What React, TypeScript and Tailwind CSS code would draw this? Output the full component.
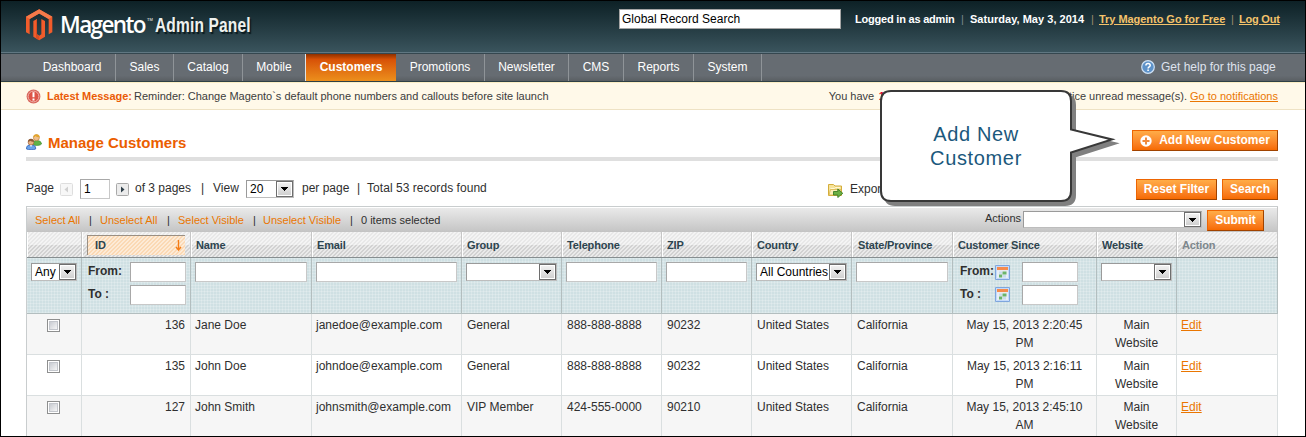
import type { ReactNode } from "react";

function Arrow({ className = "" }: { className?: string }) {
  return (
    <span className={`flex w-[17px] shrink-0 items-center justify-center self-stretch border border-[#6e6e6e] bg-linear-to-b from-[#f4f4f4] to-[#cdcdcd] shadow-[inset_0_0_0_1px_#fff] ${className}`}>
      <svg width="7" height="4" viewBox="0 0 7 4" shapeRendering="crispEdges">
        <path d="M0 0h7v1H0zM1 1h5v1H1zM2 2h3v1H2zM3 3h1v1H3z" fill="#000" />
      </svg>
    </span>
  );
}

function Select({ label = "", className = "" }: { label?: string; className?: string }) {
  return (
    <div className={`flex shrink-0 items-center border border-t-[#9a9a9a] border-l-[#9a9a9a] border-r-[#bdbdbd] border-b-[#bdbdbd] bg-white text-black ${className}`}>
      <span className="min-w-0 flex-1 pl-[3px] text-[12px] leading-[16px] whitespace-nowrap">{label}</span>
      <Arrow />
    </div>
  );
}

function Field({ children, className = "" }: { children?: ReactNode; className?: string }) {
  return (
    <div className={`h-5 shrink-0 border border-t-[#a8a8a8] border-l-[#a8a8a8] border-r-[#c8c8c8] border-b-[#c8c8c8] bg-white ${className}`}>
      {children}
    </div>
  );
}

function Button({ children, className = "" }: { children: ReactNode; className?: string }) {
  return (
    <button className={`flex h-[21px] shrink-0 items-center justify-center border border-t-[#ed6502] border-l-[#ed6502] border-r-[#a04300] border-b-[#a04300] bg-linear-to-b from-[#ffac47] to-[#f66a00] pb-px text-[12px] leading-[18px] font-bold whitespace-nowrap text-white ${className}`}>
      {children}
    </button>
  );
}

function Logo() {
  return (
    <svg width="27" height="32" viewBox="78 27 81 96" className="shrink-0">
      <path d="M117.500 28L157 50.500V97L146 103V57L117.500 40.500L89 57V103L78 97V50.500Z" fill="#f15c2b" />
      <path d="M117.500 28L157 50.500L146 57L117.500 40.500L89 57L78 50.500Z" fill="#f47a4a" />
      <path d="M100 63L111 57V103L117.500 107L124 103V57L135 63V110L117.500 121L100 110Z" fill="#f15c2b" />
      <path d="M111 57V103L117.500 107V121L108 115V59Z" fill="#d94d22" />
    </svg>
  );
}

function AlertIcon() {
  return (
    <svg width="15" height="15" viewBox="0 0 15 15" className="shrink-0">
      <circle cx="7.500" cy="7.500" r="6.900" fill="#d6645a" />
      <circle cx="7.500" cy="7.500" r="5.400" fill="#dd5548" stroke="#f0b3ab" strokeWidth="1" />
      <path d="M6.500 3.200h2v5h-2zM6.500 9.500h2v1.900h-2z" fill="#fff" />
    </svg>
  );
}

function HelpIcon() {
  return (
    <svg width="14" height="14" viewBox="0 0 14 14" className="shrink-0">
      <circle cx="7" cy="7" r="6.300" fill="#5d92c9" stroke="#cfe2f5" strokeWidth="1.200" />
      <path d="M4.900 5.400c0-2.600 4.300-2.600 4.300 0 0 1.500-2.100 1.500-2.100 3.100" fill="none" stroke="#fff" strokeWidth="1.500" />
      <path d="M6.300 9.600h1.600v1.500H6.300z" fill="#fff" />
    </svg>
  );
}

function CustomersIcon() {
  return (
    <svg width="16" height="16" viewBox="0 0 16 16" className="shrink-0">
      <path d="M6.500 10.500c0-3 2-4 4.200-4s4.800 1 4.800 3.500c-1 1.500-6 2-9 .5z" fill="#5fb348" stroke="#3c8a2c" strokeWidth=".7" />
      <circle cx="10.400" cy="3.700" r="3" fill="#f0c08c" stroke="#b67a35" strokeWidth=".6" />
      <path d="M7.300 3.500C7.300 1 8.700.3 10.500.3s3.200 1 3.200 3c-2 0-3.500-.3-4.200-1.200-.4.900-1.200 1.300-2.200 1.400z" fill="#e3a62c" />
      <path d="M.5 15c-.3-3 1.700-4.200 4.500-4.200s5 1.200 4.700 4.200c-2 1-7 1-9.200 0z" fill="#6ba3ea" stroke="#2e62b8" strokeWidth=".8" />
      <circle cx="5" cy="8.200" r="2.900" fill="#e8b183" stroke="#96582f" strokeWidth=".6" />
      <path d="M2 8c0-2.400 1.300-3.200 3-3.200s3 1 3 3c-1.600 0-3-.2-3.800-1-.5.700-1.200 1.100-2.200 1.200z" fill="#8d5a34" />
      <path d="M3.800 11.200L5 13l1.300-1.800z" fill="#fff" />
    </svg>
  );
}

function ExportIcon() {
  return (
    <svg width="16" height="15" viewBox="0 0 16 15" className="shrink-0">
      <path d="M.5 12.500V1.500h5l1.500 1.500h6.500v9.500z" fill="#f6e39a" stroke="#d4ad3b" />
      <path d="M2.500 5.500h4l1-1h4.500" fill="none" stroke="#fff8d6" />
      <path d="M1 12L2.500 6.500H13V12z" fill="#fbefb9" stroke="#d9b54c" strokeWidth=".8" />
      <path d="M5.500 8.500h4.300V6l5 4.300-5 4.200V12H5.500z" fill="#6bb045" stroke="#3c7d23" strokeWidth=".9" />
    </svg>
  );
}

function CalendarIcon() {
  return (
    <svg width="15" height="15" viewBox="0 0 15 15" className="shrink-0">
      <path d="M.5.5h14v14H.5z" fill="#e4eefb" stroke="#7fa6dd" />
      <path d="M1.500 1.500h12v12h-12z" fill="none" stroke="#c4dafa" />
      <path d="M2 2h11v3.200H2z" fill="#f58b4c" />
      <path d="M2 5.200h11V13H2z" fill="#e8eef5" />
      <path d="M7.500 6.500h4v3h-4zM4 9.500h3.200v3H4z" fill="#6bb46a" />
      <path d="M4 6.500h3v2.300H4zM7.800 10h3.200v2.500H7.800z" fill="#c9dcec" />
    </svg>
  );
}

function PageStep({ dir, dim = false, className = "" }: { dir: "prev" | "next"; dim?: boolean; className?: string }) {
  return (
    <svg width="13" height="13" viewBox="0 0 13 13" className={`shrink-0 ${className}`}>
      <rect x=".5" y=".5" width="12" height="12" rx="1" fill={dim ? "#f7f7f7" : "#ececec"} stroke={dim ? "#dedede" : "#a9a9a9"} />
      <path d={dir === "prev" ? "M8 3.500v6L4.500 6.500z" : "M5 3.500v6L8.500 6.500z"} fill={dim ? "#d0d0d0" : "#2f3f4a"} />
    </svg>
  );
}

const navSep = "border-r border-[#8f9498]";
const nav = [
  ["Dashboard", `w-[87px] ${navSep}`],
  ["Sales", `w-[58px] ${navSep}`],
  ["Catalog", `w-[69px] ${navSep}`],
  ["Mobile", "w-[63px] border-r border-[#dfe3e4]"],
  ["Customers", "w-[90px] bg-linear-to-b from-[#8e3000] via-[#d75107] via-20% to-[#ec8f1c] font-bold"],
  ["Promotions", `w-[89px] ${navSep}`],
  ["Newsletter", `w-[84px] ${navSep}`],
  ["CMS", `w-[55px] ${navSep}`],
  ["Reports", `w-[70px] ${navSep}`],
  ["System", `w-[68px] ${navSep}`],
];

const cols = "grid grid-cols-[55px_109px_121px_150px_100px_100px_90px_100px_101px_144px_80px_101px]";

const heads = ["Name", "Email", "Group", "Telephone", "ZIP", "Country", "State/Province", "Customer Since", "Website"];

const rows = [
  ["136", "Jane Doe", "janedoe@example.com", "General", "888-888-8888", "90232", "May 15, 2013 2:20:45", "PM"],
  ["135", "John Doe", "johndoe@example.com", "General", "888-888-8888", "90232", "May 15, 2013 2:16:11", "PM"],
  ["127", "John Smith", "johnsmith@example.com", "VIP Member", "424-555-0000", "90210", "May 15, 2013 2:45:10", "AM"],
];

function HeadCell({ children, className = "" }: { children?: ReactNode; className?: string }) {
  return (
    <div className={`border-r border-l border-r-[#c6c6c6] border-l-white pt-[5px] pl-1 text-[11px] leading-4 font-bold tracking-[-0.15px] whitespace-nowrap ${className}`}>
      {children}
    </div>
  );
}

function FilterCell({ children }: { children?: ReactNode }) {
  return <div className="border-r border-[#b3bebf] px-1 pt-1">{children}</div>;
}

function Cell({ children, className = "" }: { children?: ReactNode; className?: string }) {
  return <div className={`border-r border-[#dadfe0] px-[5px] pt-0.5 ${className}`}>{children}</div>;
}

function Callout() {
  return (
    <div className="absolute top-[87px] left-[877px] h-[122px] w-[242px]">
      <svg width="242" height="122" viewBox="878 88 242 122" className="absolute inset-0">
        <g transform="translate(4 4)" fill="#808080" stroke="#808080" strokeWidth="2">
          <path d="M891 91H1061Q1071 91 1071 101V129.500L1112 139.500L1071 152.500V191Q1071 201 1061 201H891Q881 201 881 191V101Q881 91 891 91Z" />
        </g>
        <path d="M891 91H1061Q1071 91 1071 101V129.500L1112 139.500L1071 152.500V191Q1071 201 1061 201H891Q881 201 881 191V101Q881 91 891 91Z" fill="#fff" stroke="#383838" strokeWidth="2" />
      </svg>
      <div className="relative w-[196px] pt-[34px] text-center text-[20px] leading-6 tracking-[0.65px] text-[#1b587c]">
        Add New
        <br />
        Customer
      </div>
    </div>
  );
}

export default function App() {
  return (
    <div className="relative flex h-[437px] w-[1306px] flex-col overflow-hidden border border-black bg-white font-['Liberation_Sans',Arial,sans-serif] text-[12px] leading-[18px] text-[#2f2f2f]">
      <header className="flex h-[51px] shrink-0 bg-linear-to-b from-[#0d2126] to-[#3a545d] pl-[25px] whitespace-nowrap">
        <div className="flex w-[593px] pt-2">
          <Logo />
          <span className="-mt-px ml-[7px] w-[87px] font-['Open_Sans','Noto_Sans',sans-serif] text-[22.5px] leading-[33px] font-semibold tracking-[-1.6px] text-white">Magento</span>
          <span className="mt-[6px] w-2 text-[4px] leading-[10px] text-white">TM</span>
          <span className="-mt-px w-[130px] origin-left scale-x-[.74] text-[21px] leading-[33px] font-bold tracking-[0.2px] text-[#eef1ee] [text-shadow:2px_2px_1px_#0a1a1e]">Admin Panel</span>
        </div>
        <div className="mt-2 h-5 w-[222px] border border-[#a5a5a5] bg-white pl-[2px] leading-[18px] text-black">Global Record Search</div>
        <div className="ml-[14px] flex pt-[9px] text-[11px] font-bold tracking-[-0.21px] text-white">
          <span className="w-[106px]">Logged in as admin</span>
          <span className="w-[9px] font-normal text-[#7b8a8c]">|</span>
          <span className="w-[121px] tracking-[0.03px]">Saturday, May 3, 2014</span>
          <span className="w-2 font-normal text-[#9b8d6c]">|</span>
          <span className="w-[132px] tracking-[-0.04px] text-[#f5c36b] underline">Try Magento Go for Free</span>
          <span className="w-2 font-normal text-[#9b8d6c]">|</span>
          <span className="text-[#f5c36b] underline">Log Out</span>
        </div>
      </header>

      <nav className="flex h-[30px] shrink-0 border-t border-b border-t-[#607782] border-b-[#2e4046] bg-[#666b71]">
        <div className="flex w-full border-t border-[#35474f] bg-linear-to-b from-[#666c72] from-80% to-[#5a5f63] pl-7">
          {nav.map(([name, cls]) => (
            <div key={name} className={`h-[27px] shrink-0 pt-1 text-center text-white ${cls}`}>
              {name}
            </div>
          ))}
          <div className="flex flex-1 items-start justify-end gap-[6px] pr-[30px] text-[#dfe3ee]">
            <span className="pt-[6px]"><HelpIcon /></span>
            <span className="w-[114px] pt-1 whitespace-nowrap">Get help for this page</span>
          </div>
        </div>
      </nav>

      <div className="flex h-7 shrink-0 items-center border-t border-b border-t-[#fbeec4] border-b-[#eee2c4] bg-[#fff9e9] pr-[27px] pl-[25px] text-[11px] whitespace-nowrap text-[#3c3c3c]">
        <AlertIcon />
        <span className="ml-[6px] w-[87px] font-bold tracking-[-0.05px] text-[#ea5b06]">Latest Message:</span>
        <span>Reminder: Change Magento`s default phone numbers and callouts before site launch</span>
        <span className="ml-auto w-[50px]">You have</span>
        <span className="w-[178px] font-bold text-[#e0002a]">1</span>
        <span>notice unread message(s).</span>
        <a className="ml-[3px] text-[#ea7601] underline">Go to notifications</a>
      </div>

      <main className="flex flex-1 flex-col pr-[27px] pl-[25px]">
        <div className="flex h-[51px] shrink-0 border-b-4 border-[#dfdfdf] pt-5">
          <div className="flex flex-1 pt-1">
            <CustomersIcon />
            <h1 className="ml-[6px] text-[15px] leading-[17px] font-bold text-[#eb5e00]">Manage Customers</h1>
          </div>
          <Button className="w-[146px]">
            <svg width="12" height="12" viewBox="0 0 12 12" className="mt-px mr-[7px]">
              <circle cx="6" cy="6" r="5.700" fill="#fff" />
              <path d="M5 2.500h2V5h2.500v2H7v2.500H5V7H2.500V5H5z" fill="#f08a3c" />
            </svg>
            Add New Customer
          </Button>
        </div>

        <div className="flex h-[45px] shrink-0 pt-[18px] whitespace-nowrap">
          <span className="w-[34px]">Page</span>
          <PageStep dir="prev" dim className="mt-1" />
          <Field className="ml-[7px] w-[30px] pl-[3px] leading-[18px] text-black">1</Field>
          <PageStep dir="next" className="mt-1 ml-[6px]" />
          <span className="ml-[6px] w-[66px]">of 3 pages</span>
          <span className="w-3">|</span>
          <span className="w-[33px]">View</span>
          <Select label="20" className="mt-px h-[18px] w-[48px]" />
          <span className="ml-2 w-[55px]">per page</span>
          <span className="w-[10px]">|</span>
          <span className="tracking-[0.05px]">Total 53 records found</span>
          <span className="ml-auto flex w-[308px] pt-px">
            <span className="mt-[3px] mr-[6px]"><ExportIcon /></span>
            Export to:
          </span>
          <Button className="w-[81px]">Reset Filter</Button>
          <Button className="ml-[5px] w-[56px]">Search</Button>
        </div>

        <div className="flex flex-col border-t border-l border-[#c9cdce]">
          <div className="flex h-[25px] border-r border-b border-[#c4c4c4] bg-linear-to-b from-[#ebebeb] to-[#c6c6c6] pt-1 pl-2 text-[11px] whitespace-nowrap shadow-[inset_0_1px_#fff]">
            <span className="w-[54px] text-[#ea7601]">Select All</span>
            <span className="w-[11px]">|</span>
            <span className="w-[67px] text-[#ea7601]">Unselect All</span>
            <span className="w-[11px]">|</span>
            <span className="w-[75px] text-[#ea7601]">Select Visible</span>
            <span className="w-[10px]">|</span>
            <span className="w-[87px] text-[#ea7601]">Unselect Visible</span>
            <span className="w-[11px]">|</span>
            <span>0 items selected</span>
            <span className="-mt-[2px] ml-auto w-[38px]">Actions</span>
            <Select className="h-[17px] w-[179px]" />
            <Button className="-mt-px mr-[13px] ml-[5px] w-[57px]">Submit</Button>
          </div>

          <div className={`${cols} h-[26px] border-b border-[#868e90] bg-[repeating-linear-gradient(135deg,#ffffff88_0_1.4px,transparent_1.4px_2.828px),linear-gradient(#e8e8e8_0_52%,#d2d2d2_52%)] text-[#2d444f]`}>
            <HeadCell />
            <div className="border-r border-l border-r-[#c6c6c6] border-l-white pt-[3px] pr-[5px] pl-1">
              <div className="flex h-5 items-start border-t border-l border-[#9a8f83] bg-[repeating-linear-gradient(135deg,#ffffff77_0_1.4px,transparent_1.4px_2.828px),linear-gradient(#fbd9b4,#fbd9b4)] pt-px pr-[3px] pl-[7px] text-[11px] leading-4 font-bold">
                <span className="flex-1">ID</span>
                <svg width="7" height="11" viewBox="0 0 7 11" className="mt-[3px]">
                  <path d="M3.500 0V10M1 7L3.500 10L6 7" fill="none" stroke="#f57c16" strokeWidth="1.400" />
                </svg>
              </div>
            </div>
            {heads.map((h) => (
              <HeadCell key={h} className={h === "State/Province" ? "pl-[5px]" : ""}>{h}</HeadCell>
            ))}
            <HeadCell className="text-[#7d878c]">Action</HeadCell>
          </div>

          <div className={`${cols} h-[56px] border-b border-[#b3bebf] bg-[#cfe0e3] bg-[repeating-linear-gradient(0deg,#ffffff33_0_1px,transparent_1px_3px),repeating-linear-gradient(90deg,#ffffff33_0_1px,transparent_1px_3px)]`}>
            <FilterCell><Select label="Any" className="mt-px h-[18px]" /></FilterCell>
            <div className="flex flex-col gap-[3px] border-r border-[#b3bebf] pt-1 pr-1 pl-[6px] leading-[18px] font-bold">
              <div className="flex h-5 justify-between"><span>From:</span><Field className="w-[56px]" /></div>
              <div className="flex h-5 justify-between"><span>To :</span><Field className="w-[56px]" /></div>
            </div>
            <FilterCell><Field /></FilterCell>
            <FilterCell><Field /></FilterCell>
            <FilterCell><Select className="mt-px h-[18px]" /></FilterCell>
            <FilterCell><Field /></FilterCell>
            <FilterCell><Field /></FilterCell>
            <FilterCell><Select label="All Countries" className="mt-px h-[18px]" /></FilterCell>
            <FilterCell><Field /></FilterCell>
            <div className="flex flex-col gap-[3px] border-r border-[#b3bebf] pt-1 pl-[7px] leading-[18px] font-bold">
              <div className="flex h-5">
                <span className="w-[35px]">From:</span>
                <span className="mt-[3px] mr-3"><CalendarIcon /></span>
                <Field className="w-[56px]" />
              </div>
              <div className="flex h-5">
                <span className="w-[35px]">To :</span>
                <span className="mt-[2px] mr-3"><CalendarIcon /></span>
                <Field className="w-[56px]" />
              </div>
            </div>
            <FilterCell><Select className="mt-px h-[18px]" /></FilterCell>
            <FilterCell />
          </div>

          {rows.map(([id, name, email, group, phone, zip, since, half], i) => (
            <div key={id} className={`${cols} h-[41px] border-b border-[#dadfe0] whitespace-nowrap ${i % 2 ? "bg-white" : "bg-[#f6f6f6]"}`}>
              <Cell>
                <div className="mt-[3px] ml-[15px] size-[13px] border border-[#8e8f8f] bg-white p-px">
                  <div className="size-full border border-[#c3c6cc] bg-linear-to-br from-[#c9ccd2] to-[#f6f6f6]" />
                </div>
              </Cell>
              <Cell className="text-right">{id}</Cell>
              <Cell className="pl-1">{name}</Cell>
              <Cell className="pl-1">{email}</Cell>
              <Cell>{group}</Cell>
              <Cell>{phone}</Cell>
              <Cell>{zip}</Cell>
              <Cell>United States</Cell>
              <Cell>California</Cell>
              <Cell className="text-center">{since}<br />{half}</Cell>
              <Cell className="text-center">Main<br />Website</Cell>
              <Cell className="pl-1"><a className="text-[#ea7601] underline">Edit</a></Cell>
            </div>
          ))}
        </div>
      </main>

      <Callout />
    </div>
  );
}
